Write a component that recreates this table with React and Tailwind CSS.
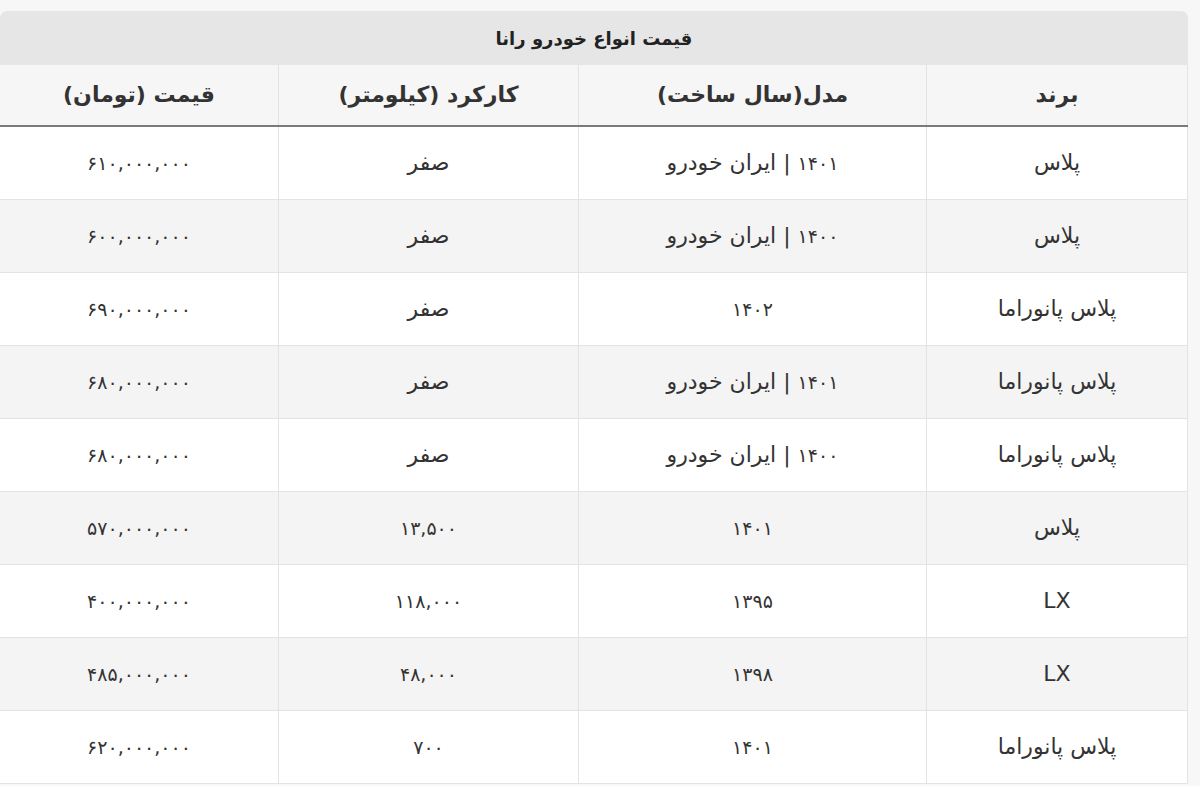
import React from "react";

const rows = [
  ["پلاس", "۱۴۰۱ | ایران خودرو", "صفر", "۶۱۰,۰۰۰,۰۰۰"],
  ["پلاس", "۱۴۰۰ | ایران خودرو", "صفر", "۶۰۰,۰۰۰,۰۰۰"],
  ["پلاس پانوراما", "۱۴۰۲", "صفر", "۶۹۰,۰۰۰,۰۰۰"],
  ["پلاس پانوراما", "۱۴۰۱ | ایران خودرو", "صفر", "۶۸۰,۰۰۰,۰۰۰"],
  ["پلاس پانوراما", "۱۴۰۰ | ایران خودرو", "صفر", "۶۸۰,۰۰۰,۰۰۰"],
  ["پلاس", "۱۴۰۱", "۱۳,۵۰۰", "۵۷۰,۰۰۰,۰۰۰"],
  ["LX", "۱۳۹۵", "۱۱۸,۰۰۰", "۴۰۰,۰۰۰,۰۰۰"],
  ["LX", "۱۳۹۸", "۴۸,۰۰۰", "۴۸۵,۰۰۰,۰۰۰"],
  ["پلاس پانوراما", "۱۴۰۱", "۷۰۰", "۶۲۰,۰۰۰,۰۰۰"],
];

function Cell({ text }) {
  const parts = text.split(/([۰-۹,]+)/).filter((p) => p !== "");
  return (
    <>
      {parts.map((p, i) =>
        /^[۰-۹,]+$/.test(p) ? (
          <span key={i} className="text-[19px] tracking-[-1px]">
            {p}
          </span>
        ) : (
          <span key={i}>{p}</span>
        )
      )}
    </>
  );
}

export default function App() {
  return (
    <div
      dir="rtl"
      className="w-[1200px] h-[786px] overflow-hidden bg-[#f7f7f7] pt-[11px] pl-0 pr-[12px]"
      style={{ fontFamily: '"DejaVu Sans", "Noto Sans", sans-serif' }}
    >
      <div className="w-[1188px]">
        <div className="h-[54px] bg-[#e6e6e6] rounded-t-[7px] flex items-center justify-center text-[18px] font-bold text-[#222]">
          قیمت انواع خودرو رانا
        </div>
        <table className="w-full table-fixed border-collapse text-[#333]">
          <colgroup>
            <col className="w-[261px]" />
            <col className="w-[348px]" />
            <col className="w-[300px]" />
            <col className="w-[279px]" />
          </colgroup>
          <thead>
            <tr className="h-[61px] bg-[#f6f6f6] border-b-[2px] border-b-[#7a7a7a]">
              {["برند", "مدل(سال ساخت)", "کارکرد (کیلومتر)", "قیمت (تومان)"].map((h, i) => (
                <th key={i} className="text-[22px] font-bold text-[#333] text-center border-x border-[#e3e3e3] leading-none">
                  {h}
                </th>
              ))}
            </tr>
          </thead>
          <tbody>
            {rows.map((r, i) => (
              <tr key={i} className={`h-[73px] ${i % 2 === 0 ? "bg-white" : "bg-[#f4f4f4]"}`}>
                {r.map((c, j) => (
                  <td key={j} className="text-[22px] text-center border border-[#e3e3e3] text-[#333] leading-none">
                    <Cell text={c} />
                  </td>
                ))}
              </tr>
            ))}
          </tbody>
        </table>
      </div>
    </div>
  );
}
